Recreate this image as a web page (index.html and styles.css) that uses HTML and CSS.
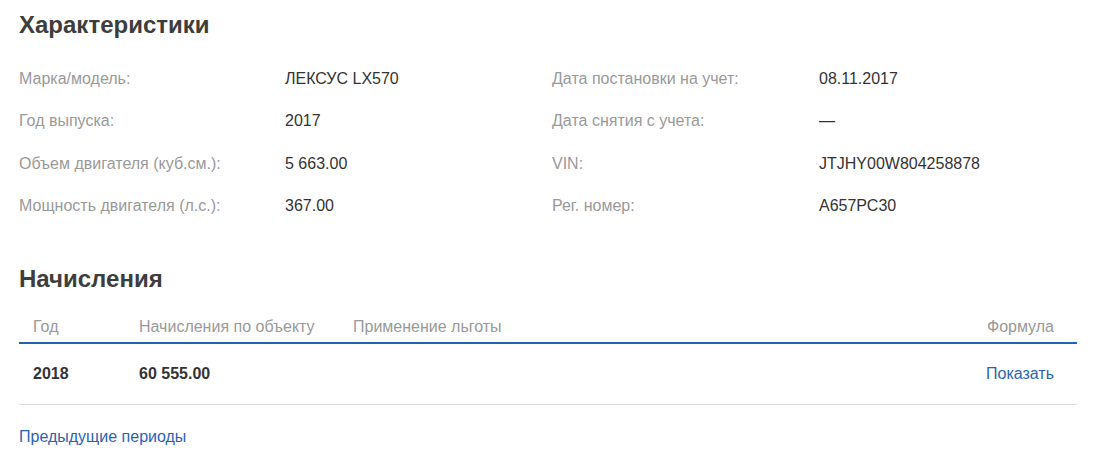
FILE: index.html
```html
<!DOCTYPE html>
<html lang="ru">
<head>
<meta charset="utf-8">
<title>Характеристики</title>
<link rel="stylesheet" href="styles.css">
</head>
<body>
<div class="page">
  <h2 class="title">Характеристики</h2>
  <div class="specs">
    <div class="label">Марка/модель:</div><div class="value">ЛЕКСУС LX570</div>
    <div class="label">Дата постановки на учет:</div><div class="value">08.11.2017</div>
    <div class="label">Год выпуска:</div><div class="value">2017</div>
    <div class="label">Дата снятия с учета:</div><div class="value">—</div>
    <div class="label">Объем двигателя (куб.см.):</div><div class="value">5 663.00</div>
    <div class="label">VIN:</div><div class="value">JTJHY00W804258878</div>
    <div class="label">Мощность двигателя (л.с.):</div><div class="value">367.00</div>
    <div class="label">Рег. номер:</div><div class="value">А657РС30</div>
  </div>

  <h2 class="title title-charges">Начисления</h2>
  <table class="charges">
    <colgroup>
      <col class="c-year">
      <col class="c-sum">
      <col class="c-benefit">
      <col class="c-formula">
    </colgroup>
    <thead>
      <tr>
        <th class="cell-year">Год</th>
        <th>Начисления по объекту</th>
        <th>Применение льготы</th>
        <th class="cell-formula">Формула</th>
      </tr>
    </thead>
    <tbody>
      <tr>
        <td class="cell-year strong">2018</td>
        <td class="strong">60 555.00</td>
        <td></td>
        <td class="cell-formula"><a class="link" href="#">Показать</a></td>
      </tr>
    </tbody>
  </table>
  <a class="link prev" href="#">Предыдущие периоды</a>
</div>
</body>
</html>
```

FILE: styles.css
```css
* { box-sizing: border-box; }

body {
  margin: 0;
  background: #ffffff;
  font-family: "Liberation Sans", Arial, sans-serif;
  font-size: 16px;
  line-height: 20px;
  color: #333333;
}

.page {
  width: 1077px;
  padding: 11px 0 0 19px;
}

.title {
  margin: 0;
  font-size: 24px;
  line-height: 28px;
  font-weight: bold;
  color: #3d3d3d;
}

.specs {
  margin-top: 19px;
  display: grid;
  grid-template-columns: 266px 267px 267px 1fr;
  grid-auto-rows: 42.33px;
  align-items: center;
}

.label {
  color: #999999;
  white-space: nowrap;
}

.value {
  color: #333333;
  white-space: nowrap;
}

.title-charges {
  margin-top: 38px;
}

.charges {
  width: 100%;
  border-collapse: collapse;
  table-layout: fixed;
}

.c-year { width: 120px; }
.c-sum { width: 214px; }
.c-formula { width: 200px; }

.charges th {
  padding: 24px 0 5px 0;
  text-align: left;
  font-weight: normal;
  color: #999999;
  border-bottom: 2px solid #1f64b0;
}

.charges td {
  padding: 20px 0 20px 0;
  border-bottom: 1px solid #dddddd;
}

.charges .cell-year { padding-left: 14px; }
.charges .cell-formula { text-align: right; padding-right: 23px; }

.strong {
  font-weight: bold;
  color: #333333;
}

.link {
  color: #2a62b3;
  text-decoration: none;
}

.prev {
  display: inline-block;
  margin-top: 22px;
}
```
